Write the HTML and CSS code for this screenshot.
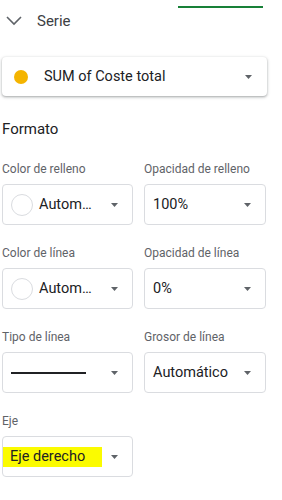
FILE: index.html
```html
<!DOCTYPE html>
<html lang="es">
<head>
  <meta charset="UTF-8">
  <meta name="viewport" content="width=device-width, initial-scale=1.0">
  <title>Serie</title>
  <link rel="stylesheet" href="styles.css">
</head>
<body>
  <div class="panel">
    <div class="tab-strip">
      <div class="tab-line"></div>
    </div>

    <div class="section-header">
      <svg class="chevron" width="24" height="24" viewBox="0 0 24 24">
        <polyline points="5,8 12,15 19,8" fill="none" stroke="#5f6368" stroke-width="1.6"/>
      </svg>
      <span>Serie</span>
    </div>

    <div class="series-select">
      <span class="dot"></span>
      <span class="series-name">SUM of Coste total</span>
      <svg class="caret" width="7" height="4" viewBox="0 0 7 4"><polygon points="0,0 7,0 3.5,4" fill="#5f6368"/></svg>
    </div>

    <h3 class="subtitle">Formato</h3>

    <div class="fields">
      <div class="field">
        <div class="label">Color de relleno</div>
        <div class="select">
          <span class="swatch"></span>
          <span class="value">Autom…</span>
          <svg class="caret" width="7" height="4" viewBox="0 0 7 4"><polygon points="0,0 7,0 3.5,4" fill="#5f6368"/></svg>
        </div>
      </div>
      <div class="field">
        <div class="label">Opacidad de relleno</div>
        <div class="select">
          <span class="value">100%</span>
          <svg class="caret" width="7" height="4" viewBox="0 0 7 4"><polygon points="0,0 7,0 3.5,4" fill="#5f6368"/></svg>
        </div>
      </div>

      <div class="field">
        <div class="label">Color de línea</div>
        <div class="select">
          <span class="swatch"></span>
          <span class="value">Autom…</span>
          <svg class="caret" width="7" height="4" viewBox="0 0 7 4"><polygon points="0,0 7,0 3.5,4" fill="#5f6368"/></svg>
        </div>
      </div>
      <div class="field">
        <div class="label">Opacidad de línea</div>
        <div class="select">
          <span class="value">0%</span>
          <svg class="caret" width="7" height="4" viewBox="0 0 7 4"><polygon points="0,0 7,0 3.5,4" fill="#5f6368"/></svg>
        </div>
      </div>

      <div class="field">
        <div class="label">Tipo de línea</div>
        <div class="select">
          <span class="value"><span class="line-sample"></span></span>
          <svg class="caret" width="7" height="4" viewBox="0 0 7 4"><polygon points="0,0 7,0 3.5,4" fill="#5f6368"/></svg>
        </div>
      </div>
      <div class="field">
        <div class="label">Grosor de línea</div>
        <div class="select">
          <span class="value">Automático</span>
          <svg class="caret" width="7" height="4" viewBox="0 0 7 4"><polygon points="0,0 7,0 3.5,4" fill="#5f6368"/></svg>
        </div>
      </div>

      <div class="field">
        <div class="label">Eje</div>
        <div class="select select-axis">
          <span class="value"><span class="highlight">Eje derecho</span></span>
          <svg class="caret" width="7" height="4" viewBox="0 0 7 4"><polygon points="0,0 7,0 3.5,4" fill="#5f6368"/></svg>
        </div>
      </div>
    </div>
  </div>
</body>
</html>
```

FILE: styles.css
```css
body {
  margin: 0;
  background: #fff;
  font-family: Roboto, "Liberation Sans", Arial, sans-serif;
  color: #202124;
}
.panel {
  padding-left: 2px;
  width: 265px;
}
.tab-strip {
  padding-top: 6px;
}
.tab-line {
  margin-left: 176px;
  width: 85px;
  height: 2px;
  background: #188038;
}
.section-header {
  margin-top: 1px;
  height: 24px;
  display: flex;
  align-items: center;
  gap: 11px;
  font-size: 15px;
  color: #3c4043;
}
.series-select {
  margin-top: 24px;
  height: 39px;
  box-sizing: border-box;
  display: flex;
  align-items: center;
  padding: 0 15px 0 12px;
  border-radius: 4px;
  box-shadow: 0 1px 2px rgba(60, 64, 67, 0.3), 0 1px 3px 1px rgba(60, 64, 67, 0.15);
  font-size: 14.5px;
}
.dot {
  width: 14px;
  height: 14px;
  border-radius: 50%;
  background: #f4b400;
  margin-right: 16px;
}
.series-name {
  flex: 1;
}
.subtitle {
  margin: 23px 0 0;
  font-size: 15px;
  font-weight: normal;
  line-height: 20px;
}
.fields {
  margin-top: 22px;
  display: grid;
  grid-template-columns: 131px 122px;
  column-gap: 11px;
  row-gap: 20px;
}
.label {
  font-size: 12px;
  line-height: 16px;
  color: #5f6368;
  margin-bottom: 7px;
  white-space: nowrap;
}
.select {
  height: 41px;
  box-sizing: border-box;
  border: 1px solid #dadce0;
  border-radius: 4px;
  display: flex;
  align-items: center;
  padding: 0 14px 0 8px;
  font-size: 14.5px;
}
.swatch {
  width: 20px;
  height: 20px;
  border: 1px solid #dadce0;
  border-radius: 50%;
  margin-right: 6px;
  flex: none;
}
.value {
  flex: 1;
  white-space: nowrap;
  display: flex;
  align-items: center;
}
.line-sample {
  display: block;
  width: 75px;
  height: 2px;
  background: #202124;
}
.caret {
  flex: none;
}
.select-axis {
  padding-left: 7px;
}
.highlight {
  background: #fbfb00;
  line-height: 20px;
  margin-left: -7px;
  padding: 0 17px 0 7px;
}
```
